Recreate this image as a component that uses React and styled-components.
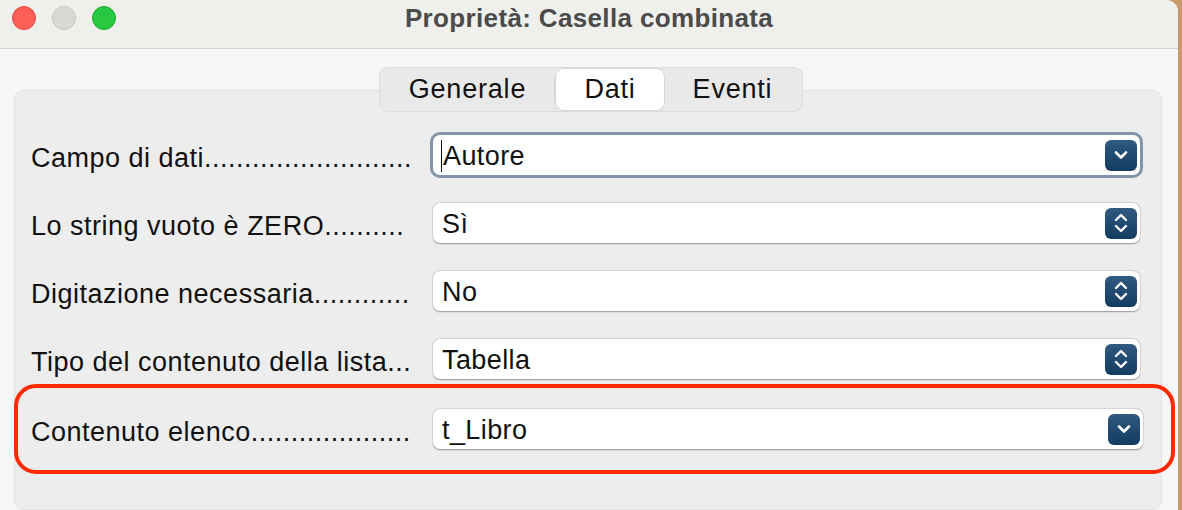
import React from 'react'
import styled, { createGlobalStyle } from 'styled-components'

const GlobalStyle = createGlobalStyle`
  html, body {
    margin: 0;
    padding: 0;
    background: #c9996a;
    overflow: hidden;
  }
  body {
    font-family: "Liberation Sans", Arial, sans-serif;
  }
`

const Window = styled.div`
  width: 1178px;
  height: 510px;
  background: #f6f6f6;
  border-top-right-radius: 12px;
  overflow: hidden;
  display: flex;
  flex-direction: column;
`

const TitleBar = styled.div`
  height: 48px;
  flex: none;
  background: #efefeb;
  border-bottom: 1px solid #d5d5d3;
  display: flex;
  align-items: center;
  position: relative;
`

const Lights = styled.div`
  display: flex;
  gap: 16px;
  padding-left: 12px;
  margin-top: -12px;
`

const Light = styled.span`
  width: 24px;
  height: 24px;
  border-radius: 50%;
  background: ${p => p.color};
  border: 1px solid ${p => p.edge};
  box-sizing: border-box;
`

const Title = styled.div`
  position: absolute;
  left: 0;
  right: 0;
  top: 3px;
  text-align: center;
  font-size: 26px;
  letter-spacing: 0.35px;
  font-weight: bold;
  color: #4b4b4b;
  pointer-events: none;
`

const Body = styled.div`
  flex: 1;
  display: flex;
  flex-direction: column;
  padding: 18px 16px 0 14px;
`

const TabBar = styled.div`
  align-self: flex-start;
  margin-left: 365px;
  position: relative;
  z-index: 1;
  display: flex;
  align-items: center;
  height: 45px;
  box-sizing: border-box;
  padding: 0 1px;
  background: #e9e9e9;
  border: 1px solid #dcdcdc;
  border-radius: 9px;
  margin-bottom: -22px;
`

const Tab = styled.div`
  width: ${p => p.w}px;
  height: 41px;
  box-sizing: border-box;
  display: flex;
  align-items: center;
  justify-content: center;
  font-size: 27px;
  letter-spacing: 0.8px;
  color: #111;
  border-radius: 8px;
  background: ${p => (p.active ? '#ffffff' : 'transparent')};
  box-shadow: ${p => (p.active ? '0 0 0 1px #d6d6d6' : 'none')};
`

const Sep = styled.span`
  width: 1px;
  height: 26px;
  margin-right: 1px;
  background: #d6d6d6;
`

const Panel = styled.div`
  flex: 1;
  background: #ededed;
  border: 1px solid #e2e2e2;
  border-radius: 9px;
  padding-top: 44px;
`

const Row = styled.div`
  display: grid;
  grid-template-columns: 402px 1fr;
  align-items: center;
  height: 40px;
  padding: 0 ${p => p.padRight}px 0 ${p => p.padLeft}px;
  margin-bottom: ${p => p.gap}px;
`

const Label = styled.div`
  font-size: 27px;
  letter-spacing: 0.5px;
  color: #111;
  white-space: nowrap;
  overflow: hidden;
  padding-top: 6px;
`

const Field = styled.div`
  height: 40px;
  box-sizing: border-box;
  background: #fff;
  border-radius: 7px;
  box-shadow: ${p => (p.focus
    ? '0 0 0 3px #8295a8'
    : '0 0.5px 1.5px rgba(0,0,0,0.35), 0 0 0 0.5px rgba(0,0,0,0.08)')};
  display: flex;
  align-items: center;
  justify-content: space-between;
  padding: 0 3px 0 ${p => (p.focus ? 10 : 9)}px;
  font-size: 27px;
  letter-spacing: 0.4px;
  color: #111;
`

const Value = styled.span`
  position: relative;
  padding-top: 3px;
`

const Caret = styled.span`
  position: absolute;
  left: -2px;
  top: 2px;
  width: 1px;
  height: 32px;
  background: #111;
`

const Button = styled.span`
  width: 32px;
  height: 31px;
  border-radius: 6px;
  background: linear-gradient(#315a80, #143b60);
  display: flex;
  align-items: center;
  justify-content: center;
`

const Highlight = styled.div`
  margin: 5px -14px 0 -1px;
  border: 4px solid #ff2a00;
  border-radius: 22px;
  padding: 21px 0;
`

function Chevron ({ double }) {
  if (double) {
    return (
      <svg width='16' height='22' viewBox='0 0 16 22'>
        <path d='M3 8 L8 3 L13 8' fill='none' stroke='#fff' strokeWidth='2.4' strokeLinecap='round' strokeLinejoin='round' />
        <path d='M3 14 L8 19 L13 14' fill='none' stroke='#fff' strokeWidth='2.4' strokeLinecap='round' strokeLinejoin='round' />
      </svg>
    )
  }
  return (
    <svg width='16' height='12' viewBox='0 0 16 12'>
      <path d='M3 3.5 L8 8.5 L13 3.5' fill='none' stroke='#fff' strokeWidth='2.6' strokeLinecap='round' strokeLinejoin='round' />
    </svg>
  )
}

const rows = [
  { label: 'Campo di dati..........................', value: 'Autore', focus: true, double: false },
  { label: 'Lo string vuoto è ZERO..........', value: 'Sì', double: true },
  { label: 'Digitazione necessaria............', value: 'No', double: true },
  { label: 'Tipo del contenuto della lista...', value: 'Tabella', double: true }
]

export default function App () {
  return (
    <>
      <GlobalStyle />
      <Window>
        <TitleBar>
          <Lights>
            <Light color='#fe5f57' edge='#e0443e' />
            <Light color='#d8d8d4' edge='#c2c2be' />
            <Light color='#28c840' edge='#1aab29' />
          </Lights>
          <Title>Proprietà: Casella combinata</Title>
        </TitleBar>
        <Body>
          <TabBar>
            <Tab w={173}>Generale</Tab>
            <Sep />
            <Tab active w={108}>Dati</Tab>
            <Tab w={137}>Eventi</Tab>
          </TabBar>
          <Panel>
            {rows.map((r, i) => (
              <Row key={r.label} padLeft={16} padRight={21} gap={i === 3 ? 0 : 28}>
                <Label>{r.label}</Label>
                <Field focus={r.focus}>
                  <Value>
                    {r.focus && <Caret />}
                    {r.value}
                  </Value>
                  <Button><Chevron double={r.double} /></Button>
                </Field>
              </Row>
            ))}
            <Highlight>
              <Row padLeft={13} padRight={28} gap={0}>
                <Label>Contenuto elenco....................</Label>
                <Field>
                  <Value>t_Libro</Value>
                  <Button><Chevron /></Button>
                </Field>
              </Row>
            </Highlight>
          </Panel>
        </Body>
      </Window>
    </>
  )
}
